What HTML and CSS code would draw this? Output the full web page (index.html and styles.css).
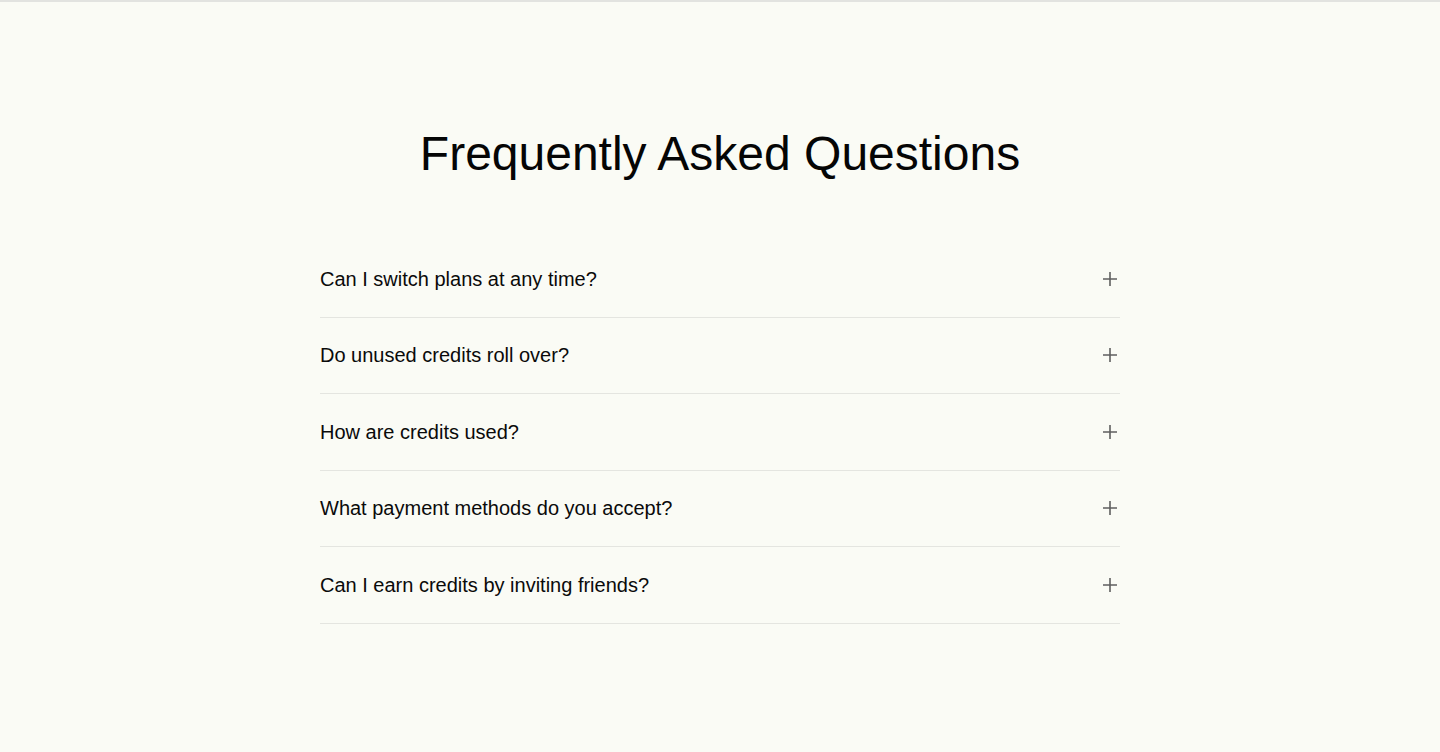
FILE: index.html
```html
<!DOCTYPE html>
<html>
<head>
<meta charset="utf-8">
<link rel="stylesheet" href="styles.css">
</head>
<body>
<div class="topline"></div>
<section class="faq">
  <h1 class="faq-title">Frequently Asked Questions</h1>
  <div class="faq-list">
    <div class="faq-item"><span class="faq-q">Can I switch plans at any time?</span><svg class="plus" viewBox="0 0 20 20"><path d="M10 3v14M3 10h14"/></svg></div>
    <div class="faq-item"><span class="faq-q">Do unused credits roll over?</span><svg class="plus" viewBox="0 0 20 20"><path d="M10 3v14M3 10h14"/></svg></div>
    <div class="faq-item"><span class="faq-q">How are credits used?</span><svg class="plus" viewBox="0 0 20 20"><path d="M10 3v14M3 10h14"/></svg></div>
    <div class="faq-item"><span class="faq-q">What payment methods do you accept?</span><svg class="plus" viewBox="0 0 20 20"><path d="M10 3v14M3 10h14"/></svg></div>
    <div class="faq-item"><span class="faq-q">Can I earn credits by inviting friends?</span><svg class="plus" viewBox="0 0 20 20"><path d="M10 3v14M3 10h14"/></svg></div>
  </div>
</section>
</body>
</html>
```
FILE: styles.css
```css
html, body {
  margin: 0;
  padding: 0;
  background: #fafbf5;
  font-family: "Liberation Sans", Arial, sans-serif;
  color: #0a0a0a;
}
.topline {
  height: 2px;
  background: #e2e3e0;
}
.faq {
  width: 800px;
  margin: 0 auto;
  padding-top: 122px;
}
.faq-title {
  margin: 0 0 57px;
  font-size: 48px;
  font-weight: 400;
  line-height: 60px;
  text-align: center;
  color: #050505;
}
.faq-item {
  display: flex;
  align-items: center;
  justify-content: space-between;
  padding: 24px 0;
  height: 27.5px;
  border-bottom: 1px solid #e4e5e0;
}
.faq-q {
  font-size: 20px;
  line-height: 28px;
}
.plus {
  width: 20px;
  height: 20px;
  fill: none;
  stroke: #5f5f5f;
  stroke-width: 1.6;
}
```
